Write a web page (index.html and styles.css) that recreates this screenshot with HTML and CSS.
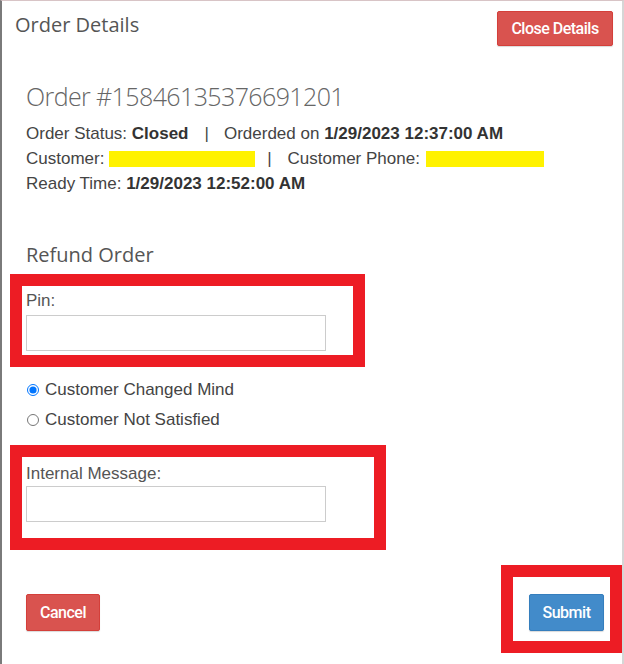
FILE: index.html
```html
<!DOCTYPE html>
<html>
<head>
<meta charset="utf-8">
<link rel="stylesheet" href="styles.css">
</head>
<body>
<div class="modal">
  <div class="header">
    <h4 class="title">Order Details</h4>
    <button class="btn btn-danger btn-close">Close Details</button>
  </div>
  <div class="body">
    <h2 class="order-no">Order #15846135376691201</h2>
    <div class="info">
      <div class="line">Order Status: <b>Closed</b><span class="sep">|</span>Orderded on <b>1/29/2023 12:37:00 AM</b></div>
      <div class="line">Customer: <span class="redact r1"></span><span class="sep sep2">|</span>Customer Phone: <span class="redact r2"></span></div>
      <div class="line">Ready Time: <b>1/29/2023 12:52:00 AM</b></div>
    </div>
    <h4 class="section">Refund Order</h4>
    <label class="lbl lbl-pin">Pin:</label>
    <input class="field field-pin" type="text">
    <div class="radios">
      <label class="radio"><input type="radio" name="reason" checked> Customer Changed Mind</label>
      <label class="radio"><input type="radio" name="reason"> Customer Not Satisfied</label>
    </div>
    <label class="lbl lbl-msg">Internal Message:</label>
    <input class="field field-msg" type="text">
    <div class="footer">
      <button class="btn btn-danger">Cancel</button>
      <button class="btn btn-primary">Submit</button>
    </div>
  </div>
  <div class="mark mark-pin"></div>
  <div class="mark mark-msg"></div>
  <div class="mark mark-submit"></div>
</div>
</body>
</html>
```
FILE: styles.css
```css
* { box-sizing: border-box; }
html, body { margin: 0; padding: 0; background: #fff; }
body { font-family: "Liberation Sans", Arial, sans-serif; color: #444; }

.modal {
  position: relative;
  width: 624px;
  height: 664px;
  border-left: 2px solid #7a7a7a;
  border-top: 1px solid #d8c4c6;
  border-right: 2px solid #d6d6d6;
  overflow: hidden;
}

.header {
  display: flex;
  justify-content: space-between;
  align-items: flex-start;
  padding: 10px 9px 0 13px;
}
.title {
  margin: 1px 0 0;
  font-family: "Open Sans", sans-serif;
  font-weight: 400;
  font-size: 20px;
  line-height: 26px;
  color: #555;
}

.btn {
  border: 1px solid transparent;
  border-radius: 2px;
  color: #fff;
  font-family: Roboto, "Liberation Sans", sans-serif;
  font-weight: 500;
  font-size: 16px;
  letter-spacing: -0.5px;
  height: 37px;
  padding: 0 13px;
  box-shadow: 0 1px 1px rgba(0,0,0,0.15);
}
.btn-danger { background: #d9534f; border-color: #d43f3a; }
.btn-primary { background: #428bca; border-color: #357ebd; }
.btn-close { width: 116px; height: 35px; padding: 0; }

.body { padding: 0 18px 0 24px; }

.order-no {
  margin: 34px 0 0;
  font-family: "Open Sans", sans-serif;
  font-weight: 300;
  font-size: 25px;
  line-height: 32px;
  color: #666;
  letter-spacing: -0.6px;
}

.info { margin-top: 9px; font-size: 17px; line-height: 25px; color: #444; }
.info b { color: #333; }
.sep { display: inline-block; margin: 0 15px 0 16px; }
.sep2 { margin: 0 16px 0 12px; }
.redact {
  display: inline-block;
  background: #fff200;
  height: 16px;
  vertical-align: -3px;
}
.r1 { width: 146px; margin-left: 0; }
.r2 { width: 118px; margin-left: 1px; }

.section {
  margin: 46px 0 0;
  font-family: "Open Sans", sans-serif;
  font-weight: 400;
  font-size: 20px;
  line-height: 26px;
  color: #555;
}

.lbl { display: block; font-size: 17px; line-height: 20px; color: #555; }
.lbl-pin { margin-top: 23px; }
.lbl-msg { margin-top: 29px; }

.field {
  display: block;
  width: 300px;
  height: 36px;
  border: 1px solid #ccc;
  background: #fff;
}
.field-pin { margin-top: 4px; }
.field-msg { margin-top: 2px; }

.radios { margin-top: 24px; display: flex; flex-direction: column; }
.radio {
  display: flex;
  align-items: center;
  font-size: 17px;
  line-height: 30px;
  color: #444;
}
.radio input { margin: 0 6px 0 1px; width: 12px; height: 12px; }

.footer {
  margin-top: 72px;
  display: flex;
  justify-content: space-between;
}
.footer .btn { width: 74px; padding: 0; }
.footer .btn-primary { width: 75px; }

.mark {
  position: absolute;
  border: 12px solid #ed1c24;
}
.mark-pin { left: 8px; top: 273px; width: 355px; height: 93px; }
.mark-msg { left: 8px; top: 444px; width: 376px; height: 105px; }
.mark-submit { left: 499px; top: 564px; width: 121px; height: 88px; }
```
